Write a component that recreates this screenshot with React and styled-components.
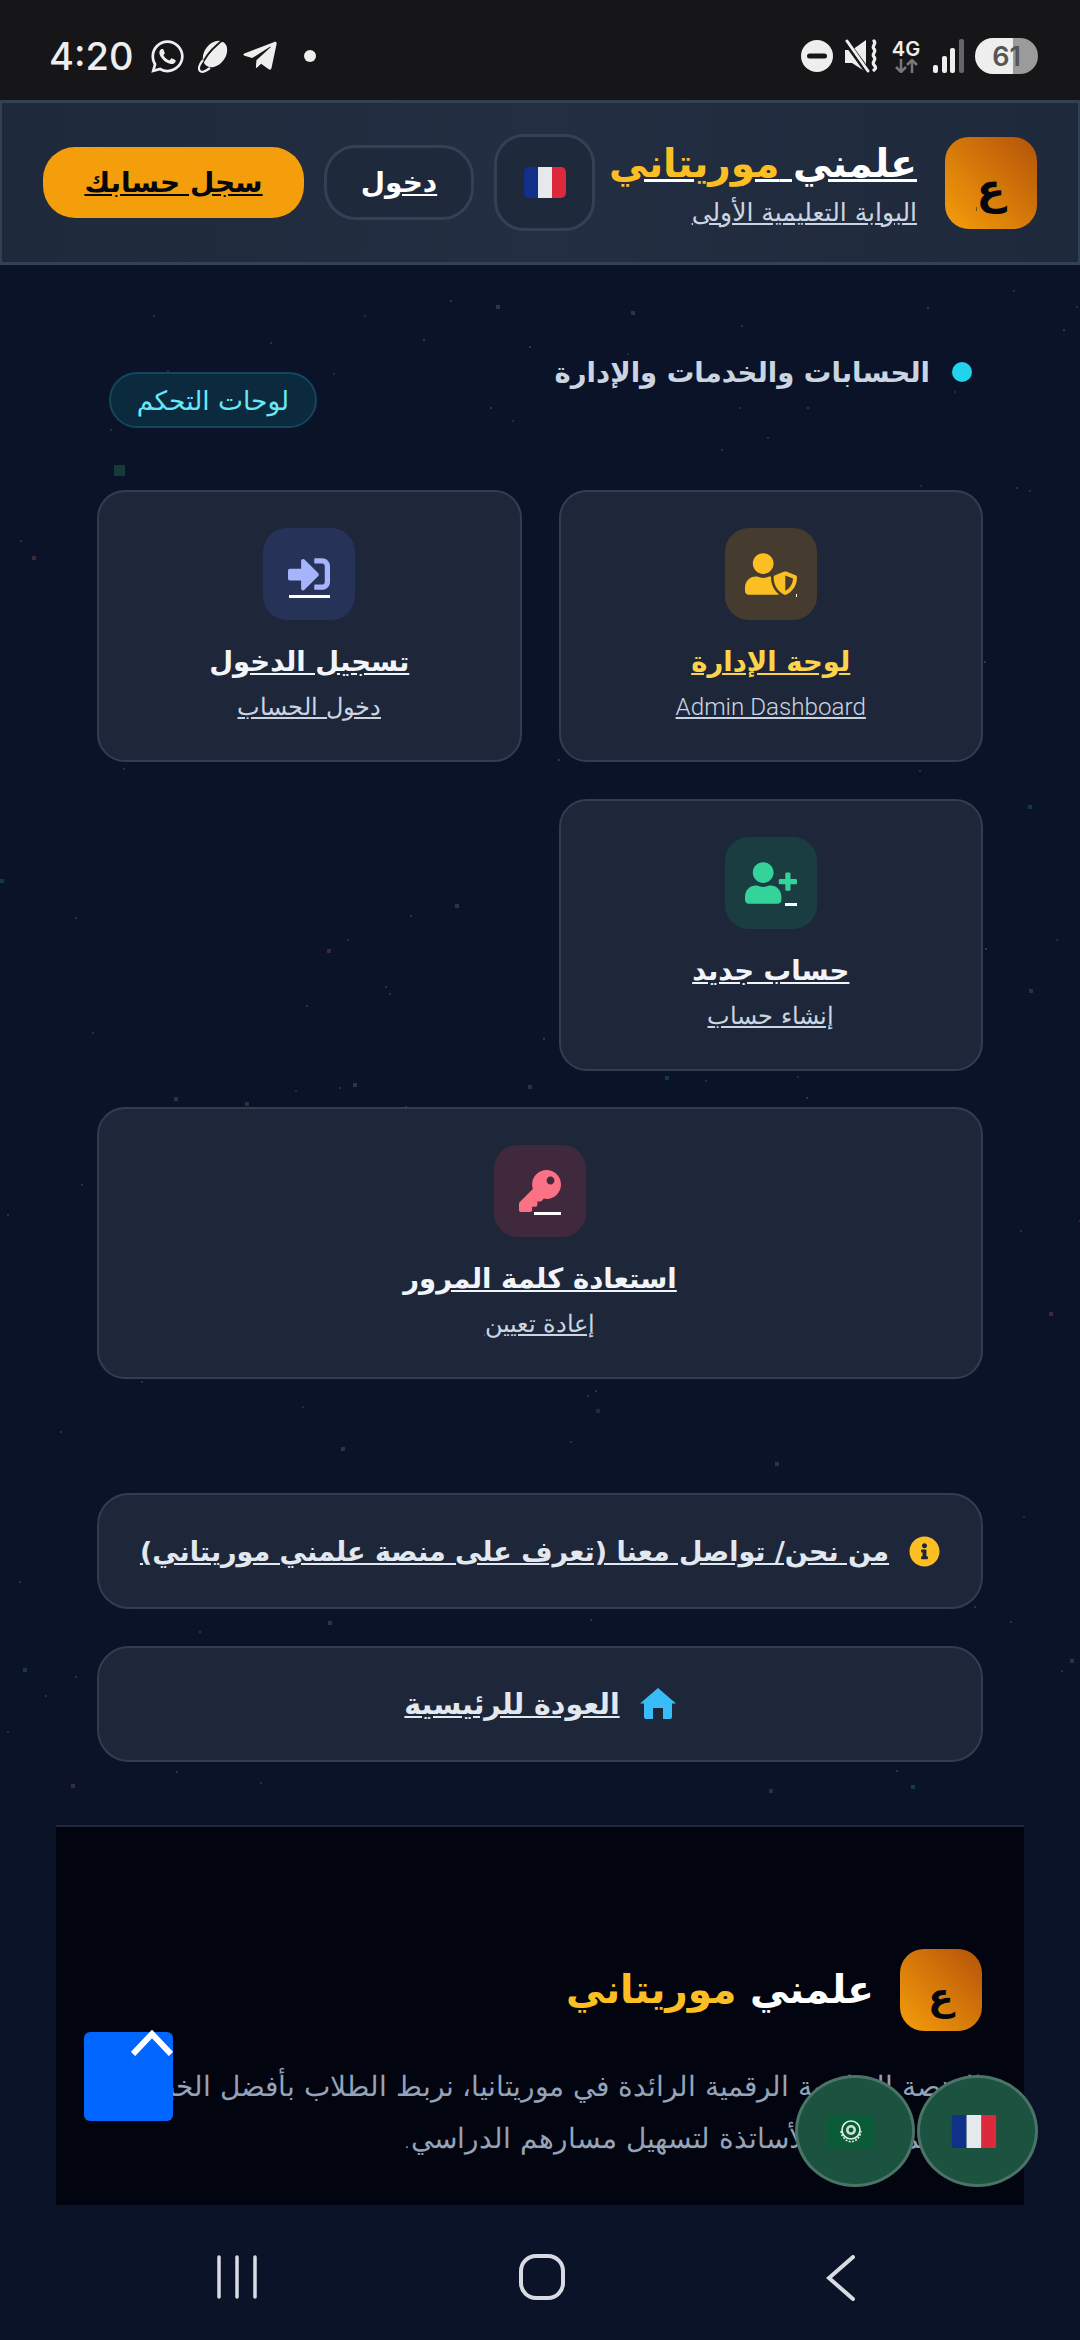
import React from "react";
import styled, { createGlobalStyle } from "styled-components";
import { FaUserShield, FaSignInAlt, FaUserPlus, FaKey, FaInfoCircle, FaWhatsapp, FaTelegramPlane } from "react-icons/fa";

const arabicFont = `"DejaVu Sans", "Noto Sans", sans-serif`;

const GlobalStyle = createGlobalStyle`
  html, body {
    margin: 0;
    padding: 0;
    background: #0a1328;
  }
  * {
    box-sizing: border-box;
  }
`;

const Screen = styled.div`
  position: relative;
  width: 1080px;
  height: 2340px;
  overflow: hidden;
  background: #0a1328;
  font-family: ${arabicFont};
  display: flex;
  flex-direction: column;
`;

const StarField = styled.div`
  position: absolute;
  inset: 0;
`;

const Star = styled.span`
  position: absolute;
  display: block;
`;

const StatusBar = styled.div`
  position: relative;
  height: 100px;
  flex: none;
  background: #161618;
  color: #eee;
  display: flex;
  align-items: center;
  justify-content: space-between;
  padding: 12px 42px 0 49px;
`;

const StatusGroup = styled.div`
  display: flex;
  align-items: center;
  gap: ${(p) => p.$gap || 12}px;
`;

const Clock = styled.span`
  font-family: Inter, Roboto, sans-serif;
  font-size: 38px;
  font-weight: 500;
  margin-right: 4px;
`;

const NotifyDot = styled.span`
  width: 12px;
  height: 12px;
  border-radius: 50%;
  background: #eee;
  margin-left: 13px;
`;

const NetStack = styled.div`
  width: 32px;
  display: flex;
  flex-direction: column;
  align-items: center;
  font-family: Inter, Roboto, sans-serif;
  font-size: 20px;
  font-weight: 600;
  line-height: 20px;
`;

const Battery = styled.div`
  width: 63px;
  height: 36px;
  border-radius: 18px;
  display: flex;
  align-items: center;
  justify-content: center;
  background: linear-gradient(90deg, #eee 60%, #9b9b9b 60%);
  color: #555;
  font-family: Inter, Roboto, sans-serif;
  font-size: 27px;
  font-weight: 600;
`;

const Header = styled.header`
  position: relative;
  height: 165px;
  flex: none;
  display: flex;
  align-items: center;
  padding: 0 41px;
  gap: 20px;
  border: 3px solid #334155;
  border-left-width: 2px;
  border-right-width: 2px;
  background: linear-gradient(90deg, #1e293b 0%, #232e42 50%, #1e293b 100%);
`;

const LogoTile = styled.div`
  width: ${(p) => p.$size}px;
  height: ${(p) => p.$size}px;
  flex: none;
  border-radius: 24px;
  background: linear-gradient(45deg, #f59e0b, #b45309);
  color: #05070f;
  display: flex;
  align-items: center;
  justify-content: center;
  font-size: ${(p) => p.$size * 0.46}px;
  font-weight: 700;
  padding-top: ${(p) => p.$size * 0.16}px;
  text-decoration: ${(p) => (p.$underline ? "underline" : "none")};
`;

const BrandBlock = styled.div`
  flex: 1;
  min-width: 0;
  display: flex;
  flex-direction: column;
  gap: 8px;
  margin-right: 8px;
`;

const BrandName = styled.div`
  font-size: ${(p) => p.$size}px;
  line-height: 52px;
  font-weight: 700;
  color: #fff;
  white-space: nowrap;
  text-decoration: ${(p) => (p.$underline ? "underline" : "none")};
`;

const Gold = styled.span`
  color: #fbbf24;
`;

const BrandTag = styled.div`
  font-size: 25px;
  line-height: 30px;
  color: #cbd5e1;
  text-decoration: underline;
  white-space: nowrap;
`;

const FlagButton = styled.div`
  width: 101px;
  height: 97px;
  flex: none;
  border-radius: 30px;
  border: 3px solid #334155;
  background: #1e293b;
  display: flex;
  align-items: center;
  justify-content: center;
`;

const GhostButton = styled.div`
  width: 150px;
  height: 75px;
  flex: none;
  border-radius: 32px;
  border: 3px solid #334155;
  background: #1e293b;
  color: #fff;
  font-size: 28px;
  font-weight: 700;
  text-decoration: underline;
  display: flex;
  align-items: center;
  justify-content: center;
`;

const SignupButton = styled.div`
  width: 261px;
  height: 71px;
  flex: none;
  border-radius: 32px;
  background: #f59e0b;
  color: #05070f;
  font-size: 28px;
  font-weight: 700;
  text-decoration: underline;
  display: flex;
  align-items: center;
  justify-content: center;
`;

const Main = styled.main`
  position: relative;
  flex: 1;
  padding: 82px 97px 0;
  display: flex;
  flex-direction: column;
`;

const SectionHead = styled.div`
  display: flex;
  justify-content: space-between;
  align-items: flex-start;
  padding: 0 11px 0 12px;
  margin-bottom: 62px;
`;

const SectionTitle = styled.h2`
  margin: 0;
  display: flex;
  align-items: center;
  gap: 22px;
  font-size: 27.500px;
  line-height: 50px;
  font-weight: 700;
  color: #cbd5e1;
`;

const Dot = styled.span`
  width: 20px;
  height: 20px;
  border-radius: 50%;
  background: #22d3ee;
`;

const Pill = styled.span`
  margin-top: 25px;
  width: 208px;
  height: 56px;
  border-radius: 28px;
  border: 2px solid #14465c;
  background: #0c2a3d;
  color: #67e8f9;
  font-size: 26.500px;
  display: flex;
  align-items: center;
  justify-content: center;
`;

const CardGrid = styled.div`
  display: grid;
  grid-template-columns: 1fr 1fr;
  gap: 36.500px 37px;
`;

const Card = styled.a`
  grid-column: ${(p) => (p.$wide ? "1 / -1" : "auto")};
  height: 272px;
  border-radius: 28px;
  border: 2px solid #333d50;
  background: #1e2739;
  padding-top: 36px;
  display: flex;
  flex-direction: column;
  align-items: center;
`;

const IconTile = styled.div`
  width: 92px;
  height: 92px;
  border-radius: 24px;
  background: ${(p) => p.$bg};
  color: ${(p) => p.$color};
  display: flex;
  align-items: center;
  justify-content: center;
  font-size: ${(p) => p.$size || 42}px;
  margin-bottom: 18px;
`;

const Glyph = styled.span`
  position: relative;
  display: flex;
  &::after {
    content: "";
    position: absolute;
    right: 0;
    bottom: ${(p) => p.$drop}px;
    width: ${(p) => p.$dash}px;
    height: 3px;
    background: #fff;
  }
`;

const CardTitle = styled.div`
  font-size: 27.500px;
  line-height: 46px;
  font-weight: 700;
  color: ${(p) => p.$color || "#f1f5f9"};
  text-decoration: underline;
`;

const CardSub = styled.div`
  margin-top: 4px;
  font-family: ${(p) => (p.$latin ? "Roboto, sans-serif" : "inherit")};
  font-size: ${(p) => (p.$latin ? 24.2 : 23.7)}px;
  font-weight: 300;
  line-height: 38px;
  color: #cbd5e1;
  text-decoration: underline;
`;

const ActionList = styled.div`
  margin-top: 114px;
  display: flex;
  flex-direction: column;
  gap: 37px;
`;

const ActionRow = styled.a`
  height: 116px;
  border-radius: 32px;
  border: 2px solid #333d50;
  background: #1e2739;
  display: flex;
  align-items: center;
  justify-content: center;
  gap: 20px;
  color: #e2e8f0;
  font-size: ${(p) => p.$size}px;
  font-weight: 700;
  text-decoration: underline;
  white-space: nowrap;
`;

const ActionIcon = styled.span`
  display: flex;
  color: ${(p) => p.$color};
  font-size: ${(p) => p.$size}px;
`;

const Footer = styled.footer`
  position: relative;
  height: 380px;
  flex: none;
  margin: 63px -41px 0;
  border-top: 2px solid #1e293b;
  background: #02040f;
  padding: 122px 42px 0;
  overflow: hidden;
`;

const FooterBrand = styled.div`
  display: flex;
  align-items: center;
  gap: 26px;
`;

const FooterText = styled.p`
  margin: 30px 0 0;
  font-size: 28px;
  font-weight: 300;
  line-height: 52px;
  color: #94a3b8;
  white-space: nowrap;
`;

const ScrollTop = styled.div`
  position: absolute;
  left: 84px;
  top: 2032px;
  width: 89px;
  height: 89px;
  border-radius: 6px;
  background: #0066ff;
  display: flex;
  justify-content: flex-end;
  align-items: flex-start;
`;

const ChevronMark = styled.svg`
  width: 42px;
  height: 26px;
  margin-top: -2px;
  flex: none;
`;

const FloatFlag = styled.div`
  position: absolute;
  left: ${(p) => p.$left}px;
  top: 2075px;
  width: ${(p) => p.$width}px;
  height: 112px;
  border-radius: 50%;
  border: 3px solid #4a7468;
  background: #1c5240;
  padding-right: 8px;
  display: flex;
  align-items: center;
  justify-content: center;
`;

const NavBar = styled.nav`
  position: absolute;
  left: 0;
  right: 0;
  bottom: 0;
  height: 135px;
  padding: 0 224px 0 217px;
  display: flex;
  align-items: flex-start;
  justify-content: space-between;
`;

const NavMark = styled.svg`
  margin-top: ${(p) => p.$top}px;
  flex: none;
`;

function makeStars() {
  // seeded so the sky is the same on every render
  let seed = 41;
  const next = () => {
    seed = (seed * 16807) % 2147483647;
    return seed / 2147483647;
  };
  const colors = ["#1d3a48", "#3c2a36", "#16303c", "#2c3450", "#123c35"];
  return Array.from({ length: 170 }, () => ({
    x: Math.round(next() * 1080),
    y: Math.round(270 + next() * 1550),
    s: next() > 0.75 ? 4 : 2,
    c: colors[Math.floor(next() * colors.length)],
  }));
}

const stars = makeStars();

const FranceFlag = ({ w, h, r = 0 }) => (
  <svg width={w} height={h} viewBox="0 0 42 31">
    <defs>
      <clipPath id={`fr${w}`}>
        <rect width="42" height="31" rx={r} />
      </clipPath>
    </defs>
    <g clipPath={`url(#fr${w})`}>
      <rect width="14" height="31" fill="#10308a" />
      <rect x="14" width="14" height="31" fill="#e6e9ec" />
      <rect x="28" width="14" height="31" fill="#dc2a3c" />
    </g>
  </svg>
);

const ArabFlag = () => (
  <svg width="46" height="33" viewBox="0 0 46 33">
    <rect width="46" height="33" fill="#0a5c38" />
    <circle cx="23" cy="15" r="9" fill="none" stroke="#e6efe6" strokeWidth="1.600" />
    <circle cx="23" cy="15" r="5" fill="#cfe0cf" />
    <circle cx="23" cy="15" r="2.400" fill="#0a5c38" />
    <path d="M13 16c1 7 5 10 10 11 5-1 9-4 10-11" fill="none" stroke="#e6efe6" strokeWidth="1.600" strokeDasharray="2 1.400" />
  </svg>
);

const PlanetIcon = () => (
  <svg width="31" height="34" viewBox="0 0 31 34">
    <ellipse cx="17" cy="15" rx="10.500" ry="14.500" transform="rotate(38 17 15)" fill="#eee" />
    <path d="M29 2.500C24 1 23 2 20 5 13 11 6 20 3.500 27" fill="none" stroke="#161618" strokeWidth="1.800" />
    <path d="M5 21c-4 5-5 9-3 11s6 0 10-3" fill="none" stroke="#eee" strokeWidth="2.200" />
  </svg>
);

const DndIcon = () => (
  <svg width="32" height="32" viewBox="0 0 32 32">
    <circle cx="16" cy="16" r="16" fill="#eee" />
    <rect x="6" y="13.500" width="20" height="5" rx="2.500" fill="#161618" />
  </svg>
);

const MuteIcon = () => (
  <svg width="35" height="34" viewBox="0 0 35 34">
    <path d="M1 11h7L22 1v32L8 24H1z" fill="#eee" />
    <path d="M0 0l24 33" stroke="#161618" strokeWidth="6" />
    <path d="M3 2l21 30" stroke="#eee" strokeWidth="3" strokeLinecap="round" />
    <path d="M30 2c3 3-3 5 0 8s-3 5 0 8-3 5 0 8 1 4 0 5" fill="none" stroke="#eee" strokeWidth="3.200" strokeLinecap="round" />
  </svg>
);

const ArrowsIcon = () => (
  <svg width="24" height="14" viewBox="0 0 24 14" fill="none" stroke="#777" strokeWidth="2.500">
    <path d="M7 0v12M2 8l5 5 5-5" />
    <path d="M18 14V2M13 6l5-5 5 5" />
  </svg>
);

const SignalIcon = () => (
  <svg width="31" height="34" viewBox="0 0 31 34">
    <rect x="0" y="26" width="5" height="8" rx="2" fill="#eee" />
    <rect x="9" y="17" width="5" height="17" rx="2" fill="#eee" />
    <rect x="17" y="9" width="5" height="25" rx="2" fill="#eee" />
    <rect x="26" y="0" width="5" height="34" rx="2" fill="#666" />
  </svg>
);

const HouseIcon = () => (
  <svg width="36" height="32" viewBox="0 0 36 32">
    <path d="M18 0l18 15.500h-4V29a2 2 0 0 1-2 2h-7V20H13v11H6a2 2 0 0 1-2-2V15.500H0z" fill="#38bdf8" />
  </svg>
);

export default function App() {
  return (
    <Screen dir="rtl">
      <GlobalStyle />
      <StarField>
        {stars.map((st, i) => (
          <Star key={i} style={{ left: st.x, top: st.y, width: st.s, height: st.s, background: st.c }} />
        ))}
        <Star style={{ left: 114, top: 465, width: 11, height: 11, background: "#123c35" }} />
      </StarField>

      <StatusBar dir="ltr">
        <StatusGroup>
          <Clock>4:20</Clock>
          <FaWhatsapp size={37} />
          <PlanetIcon />
          <FaTelegramPlane size={38} />
          <NotifyDot />
        </StatusGroup>
        <StatusGroup $gap={11}>
          <DndIcon />
          <MuteIcon />
          <NetStack>
            4G
            <ArrowsIcon />
          </NetStack>
          <SignalIcon />
          <Battery>61</Battery>
        </StatusGroup>
      </StatusBar>

      <Header>
        <LogoTile $size={92} $underline>ع</LogoTile>
        <BrandBlock>
          <BrandName $size={39} $underline>
            علمني <Gold>موريتاني</Gold>
          </BrandName>
          <BrandTag>البوابة التعليمية الأولى</BrandTag>
        </BrandBlock>
        <FlagButton>
          <FranceFlag w={42} h={31} r={5} />
        </FlagButton>
        <GhostButton>دخول</GhostButton>
        <SignupButton>سجل حسابك</SignupButton>
      </Header>

      <Main>
        <SectionHead>
          <SectionTitle>
            <Dot />
            الحسابات والخدمات والإدارة
          </SectionTitle>
          <Pill>لوحات التحكم</Pill>
        </SectionHead>

        <CardGrid>
          <Card>
            <IconTile $bg="#453b2f" $color="#fbbf24" $size={52}>
              <Glyph $dash={1} $drop={3}>
                <FaUserShield />
              </Glyph>
            </IconTile>
            <CardTitle $color="#fcd34d">لوحة الإدارة</CardTitle>
            <CardSub $latin>Admin Dashboard</CardSub>
          </Card>
          <Card>
            <IconTile $bg="#263257" $color="#a5b4fc">
              <Glyph $dash={41} $drop={-3}>
                <FaSignInAlt />
              </Glyph>
            </IconTile>
            <CardTitle>تسجيل الدخول</CardTitle>
            <CardSub>دخول الحساب</CardSub>
          </Card>
          <Card>
            <IconTile $bg="#1a3d42" $color="#34d399" $size={52}>
              <Glyph $dash={12} $drop={3}>
                <FaUserPlus />
              </Glyph>
            </IconTile>
            <CardTitle>حساب جديد</CardTitle>
            <CardSub>إنشاء حساب</CardSub>
          </Card>
          <Card $wide>
            <IconTile $bg="#41293d" $color="#fb7185">
              <Glyph $dash={27} $drop={-3}>
                <FaKey />
              </Glyph>
            </IconTile>
            <CardTitle>استعادة كلمة المرور</CardTitle>
            <CardSub>إعادة تعيين</CardSub>
          </Card>
        </CardGrid>

        <ActionList>
          <ActionRow $size={27}>
            <ActionIcon $color="#fbbf24" $size={31}>
              <FaInfoCircle />
            </ActionIcon>
            من نحن/ تواصل معنا (تعرف على منصة علمني موريتاني)
          </ActionRow>
          <ActionRow $size={28.4}>
            <ActionIcon>
              <HouseIcon />
            </ActionIcon>
            العودة للرئيسية
          </ActionRow>
        </ActionList>

        <Footer>
          <FooterBrand>
            <LogoTile $size={82}>ع</LogoTile>
            <BrandName $size={39}>
              علمني <Gold>موريتاني</Gold>
            </BrandName>
          </FooterBrand>
          <FooterText>
            المنصة التعليمية الرقمية الرائدة في موريتانيا، نربط الطلاب بأفضل الخبراء
            <br />
            من المعلمين والأساتذة لتسهيل مسارهم الدراسي.
          </FooterText>
        </Footer>
      </Main>

      <ScrollTop dir="ltr">
        <ChevronMark viewBox="0 0 42 26" fill="none" stroke="#fff" strokeWidth="6">
          <path d="M2 24L21 4l19 20" />
        </ChevronMark>
      </ScrollTop>
      <FloatFlag $left={795} $width={120}>
        <ArabFlag />
      </FloatFlag>
      <FloatFlag $left={917} $width={121}>
        <FranceFlag w={46} h={33} />
      </FloatFlag>

      <NavBar dir="ltr">
        <NavMark $top={50} width="40" height="44" viewBox="0 0 40 44" stroke="#d8dbe2" strokeWidth="3.500" strokeLinecap="round">
          <path d="M2 2v40M20 2v40M38 2v40" />
        </NavMark>
        <NavMark $top={49} width="46" height="46" viewBox="0 0 46 46" fill="none" stroke="#d8dbe2" strokeWidth="4">
          <rect x="2" y="2" width="42" height="42" rx="15" />
        </NavMark>
        <NavMark $top={50} width="30" height="46" viewBox="0 0 30 46" fill="none" stroke="#d8dbe2" strokeWidth="4" strokeLinecap="round">
          <path d="M27 2L3 23l24 21" />
        </NavMark>
      </NavBar>
    </Screen>
  );
}
